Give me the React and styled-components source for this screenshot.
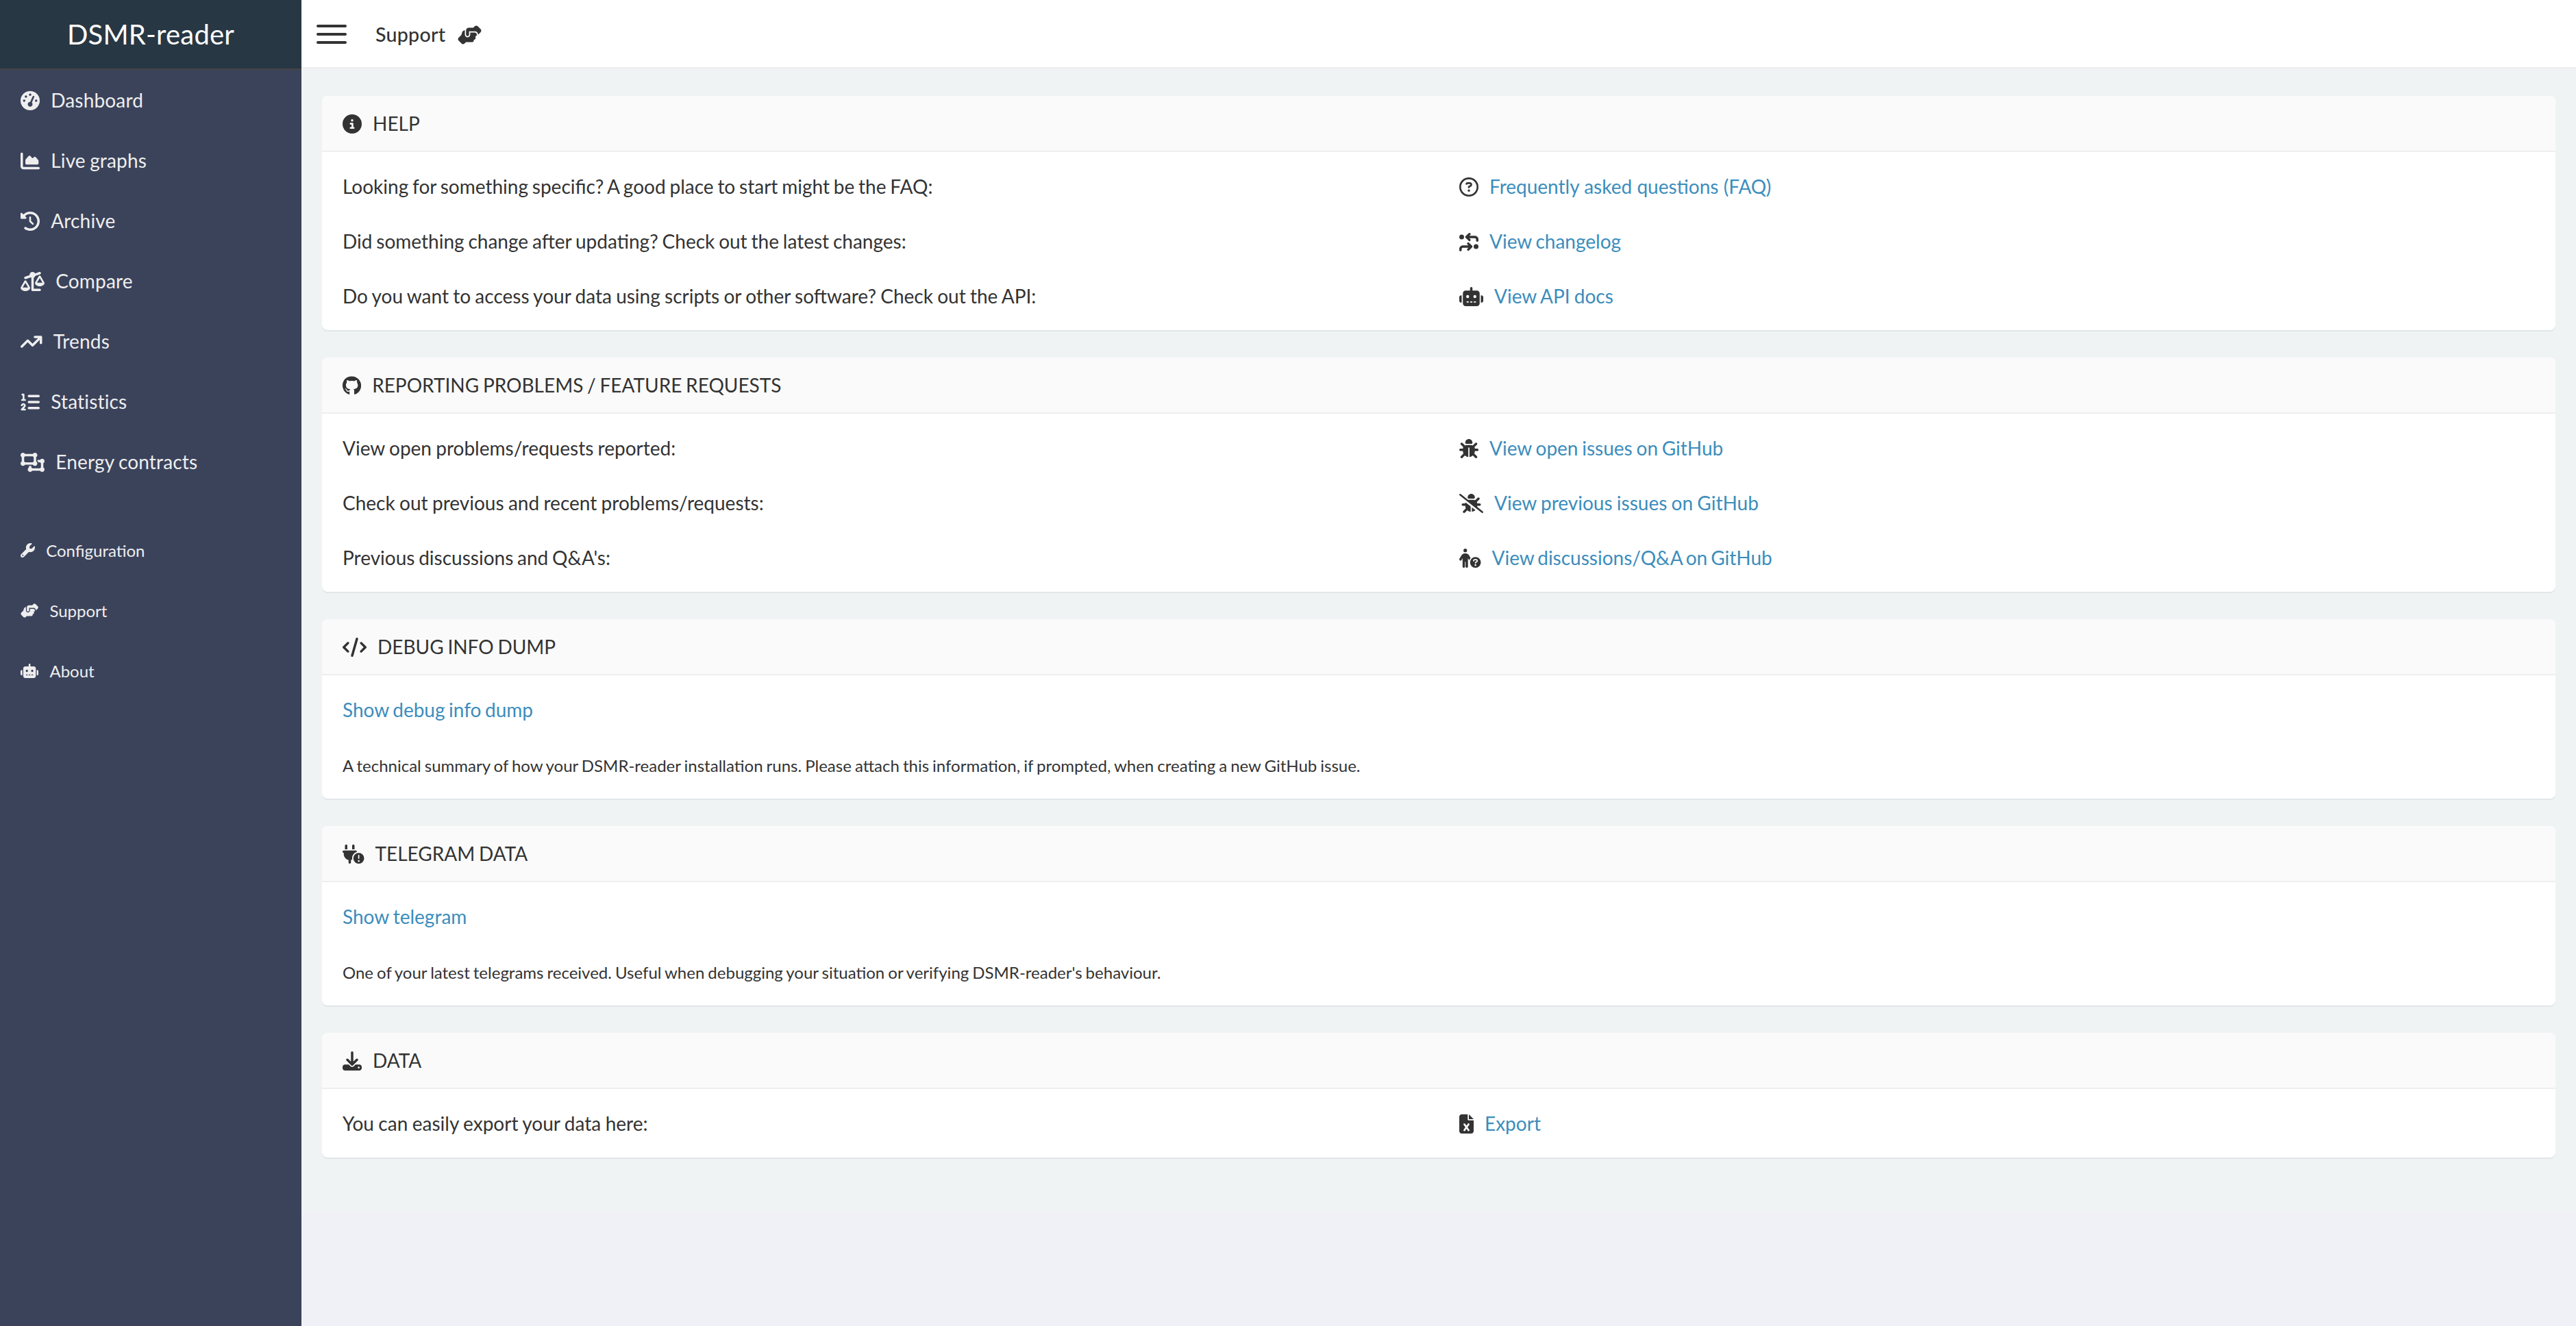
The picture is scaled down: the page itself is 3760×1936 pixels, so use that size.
import React from "react";
import styled, { createGlobalStyle, css } from "styled-components";
import {
  FaGaugeHigh, FaChartArea, FaClockRotateLeft, FaScaleUnbalanced, FaArrowTrendUp, FaListOl,
  FaObjectUngroup, FaWrench, FaRobot, FaCircleInfo, FaRegCircleQuestion, FaArrowsTurnToDots,
  FaGithub, FaBug, FaBugSlash, FaPersonCircleQuestion, FaCode, FaPlugCircleExclamation,
  FaDownload, FaFileExcel, FaHandshakeAngle,
} from "react-icons/fa6";

const GlobalStyle = createGlobalStyle`
  *, *::before, *::after { box-sizing: border-box; }
  body {
    margin: 0;
    background: #f0f1f7;
    color: #333;
    font: 400 28px/40px Lato, "Open Sans", sans-serif;
  }
`;

const Page = styled.div`
  display: flex;
  align-items: stretch;
  min-height: 100vh;
`;

const Sidebar = styled.aside`
  flex: 0 0 440px;
  background: #3b435b;
  color: #eee;
`;

const Brand = styled.div`
  display: flex;
  align-items: center;
  justify-content: center;
  height: 102px;
  border-bottom: 2px solid #444;
  background: #283744;
  color: #fff;
  font-size: 40px;
  letter-spacing: 0.2px;
`;

const Menu = styled.nav`
  display: flex;
  flex-direction: column;
`;

/* $ratio is the glyph's width relative to its height */
const Icon = styled.svg.attrs({ "aria-hidden": true })`
  width: ${(p) => p.$ratio || 1}em;
  height: 1em;
  vertical-align: -0.125em;
`;

const MenuItem = styled.a`
  height: 88px;
  padding: 0 30px;
  line-height: 88px;
  letter-spacing: 0.17px;
  word-spacing: -1px;
  white-space: nowrap;

  ${Icon} { margin-right: 16.2px; }

  ${(p) => p.$small && css`
    font-size: 24px;
    letter-spacing: normal;
    ${Icon} { font-size: 21px; vertical-align: -1px; }
  `}
`;

const MenuGap = styled.div`
  height: 42px;
`;

const Main = styled.div`
  flex: 1;
  min-width: 0;
`;

const TopBar = styled.header`
  display: flex;
  align-items: center;
  height: 100px;
  padding-left: 22px;
  border-bottom: 2px solid #eee;
  background: #fff;
`;

const Toggle = styled.button`
  display: flex;
  flex-direction: column;
  gap: 8px;
  width: 44px;
  margin: 2px 42px 0 0;
  padding: 0;
  border: 0;
  background: none;
`;

const ToggleBar = styled.span`
  height: 4px;
  border-radius: 2px;
  background: #333;
`;

const Title = styled.h1`
  margin: 2px 0 0;
  font-size: 28.6px;
  font-weight: 500;
  letter-spacing: 0.25px;

  ${Icon} {
    margin-left: 17.6px;
    font-size: 28px;
  }
`;

const Content = styled.main`
  display: flex;
  flex-direction: column;
  gap: 40px;
  padding: 40px 30px 80px;
  background: #eff3f4;
`;

const Card = styled.section`
  border-radius: 8px;
  background: #fff;
  box-shadow: 0 2px 0 #e1e6e7;
`;

const CardHeader = styled.header`
  height: 82px;
  padding: 20px 30px;
  border-bottom: 2px solid #eee;
  border-radius: 8px 8px 0 0;
  background: #fafafa;
  text-transform: uppercase;
  word-spacing: -1.4px;

  ${Icon} { margin-right: 16px; }
`;

const CardBody = styled.div`
  padding: 10px 0;
`;

const Row = styled.div`
  display: grid;
  grid-template-columns: 1fr 1fr;
  height: 80px;
  line-height: 80px;
`;

const Cell = styled.div`
  padding: 0 30px;
  white-space: nowrap;
  word-spacing: ${(p) => p.$spacing ?? -1.1}px;

  ${Icon} { margin-right: 16px; }
`;

const Link = styled.a`
  color: #3c8dbc;
  text-decoration: none;
`;

const Note = styled.small`
  font-size: 24px;
`;

const menu = [
  [FaGaugeHigh, "Dashboard", 1],
  [FaChartArea, "Live graphs", 1],
  [FaClockRotateLeft, "Archive", 1],
  [FaScaleUnbalanced, "Compare", 1.25],
  [FaArrowTrendUp, "Trends", 1.125],
  [FaListOl, "Statistics", 1],
  [FaObjectUngroup, "Energy contracts", 1.25],
];

const secondaryMenu = [
  [FaWrench, "Configuration", 1],
  [FaHandshakeAngle, "Support", 1.25],
  [FaRobot, "About", 1.25],
];

const cards = [
  {
    icon: FaCircleInfo,
    title: "Help",
    rows: [
      { text: "Looking for something specific? A good place to start might be the FAQ:", icon: FaRegCircleQuestion, label: "Frequently asked questions (FAQ)", spacing: -1.35, linkSpacing: 0.1 },
      { text: "Did something change after updating? Check out the latest changes:", icon: FaArrowsTurnToDots, label: "View changelog", spacing: -1.3, linkSpacing: -1.5 },
      { text: "Do you want to access your data using scripts or other software? Check out the API:", icon: FaRobot, ratio: 1.25, label: "View API docs", spacing: -0.9, linkSpacing: -1 },
    ],
  },
  {
    icon: FaGithub,
    ratio: 0.96875,
    title: "Reporting problems / feature requests",
    rows: [
      { text: "View open problems/requests reported:", icon: FaBug, label: "View open issues on GitHub", spacing: -0.9, linkSpacing: -1.4 },
      { text: "Check out previous and recent problems/requests:", icon: FaBugSlash, ratio: 1.25, label: "View previous issues on GitHub", spacing: -0.8, linkSpacing: -0.9 },
      { text: "Previous discussions and Q&A's:", icon: FaPersonCircleQuestion, ratio: 1.125, label: "View discussions/Q&A on GitHub", spacing: -1.4, linkSpacing: -2.2 },
    ],
  },
  {
    icon: FaCode,
    ratio: 1.25,
    title: "Debug info dump",
    link: "Show debug info dump",
    linkSpacing: -1.6,
    note: "A technical summary of how your DSMR-reader installation runs. Please attach this information, if prompted, when creating a new GitHub issue.",
  },
  {
    icon: FaPlugCircleExclamation,
    ratio: 1.125,
    title: "Telegram data",
    link: "Show telegram",
    note: "One of your latest telegrams received. Useful when debugging your situation or verifying DSMR-reader's behaviour.",
  },
  {
    icon: FaDownload,
    title: "Data",
    rows: [{ text: "You can easily export your data here:", icon: FaFileExcel, ratio: 0.75, label: "Export", spacing: -0.7 }],
  },
];

export default function App() {
  return (
    <>
      <GlobalStyle />
      <Page>
        <Sidebar>
          <Brand>DSMR-reader</Brand>
          <Menu>
            {menu.map(([glyph, label, ratio]) => (
              <MenuItem key={label}><Icon as={glyph} $ratio={ratio} />{label}</MenuItem>
            ))}
            <MenuGap />
            {secondaryMenu.map(([glyph, label, ratio]) => (
              <MenuItem key={label} $small><Icon as={glyph} $ratio={ratio} />{label}</MenuItem>
            ))}
          </Menu>
        </Sidebar>
        <Main>
          <TopBar>
            <Toggle aria-label="Toggle menu"><ToggleBar /><ToggleBar /><ToggleBar /></Toggle>
            <Title>Support<Icon as={FaHandshakeAngle} $ratio={1.25} /></Title>
          </TopBar>
          <Content>
            {cards.map(({ icon, ratio, title, rows, link, linkSpacing, note }) => (
              <Card key={title}>
                <CardHeader><Icon as={icon} $ratio={ratio} />{title}</CardHeader>
                <CardBody>
                  {rows && rows.map((row) => (
                    <Row key={row.label}>
                      <Cell $spacing={row.spacing}>{row.text}</Cell>
                      <Cell $spacing={row.linkSpacing}>
                        <Icon as={row.icon} $ratio={row.ratio} />
                        <Link href="#">{row.label}</Link>
                      </Cell>
                    </Row>
                  ))}
                  {link && <Row><Cell $spacing={linkSpacing}><Link href="#">{link}</Link></Cell></Row>}
                  {note && <Row><Cell><Note>{note}</Note></Cell></Row>}
                </CardBody>
              </Card>
            ))}
          </Content>
        </Main>
      </Page>
    </>
  );
}
